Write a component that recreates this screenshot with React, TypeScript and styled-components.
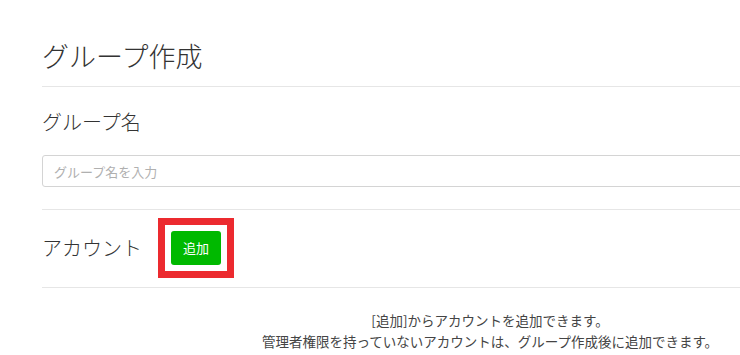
import React from 'react';
import styled, { createGlobalStyle } from 'styled-components';

const GlobalStyle = createGlobalStyle`
  html, body {
    margin: 0;
    padding: 0;
    overflow: hidden;
    background: #fff;
  }
  body {
    font-family: "Noto Sans CJK JP", "Noto Sans", sans-serif;
    color: #333;
  }
`;

export default function App() {
  return (
    <>
      <GlobalStyle />
      <Page>
        <Title>グループ作成</Title>
        <Section>
          <Label>グループ名</Label>
          <Input placeholder="グループ名を入力" />
        </Section>
        <Section>
          <Row>
            <Label>アカウント</Label>
            <Highlight>
              <AddButton>追加</AddButton>
            </Highlight>
          </Row>
        </Section>
        <Note>
          [追加]からアカウントを追加できます。
          <br />
          管理者権限を持っていないアカウントは、グループ作成後に追加できます。
        </Note>
      </Page>
    </>
  );
}

const Page = styled.div`
  width: 896px;
  margin-left: 42px;
  padding-top: 36px;
`;

const Title = styled.h1`
  margin: 0;
  font-size: 27px;
  font-weight: 300;
  line-height: 40px;
  padding-bottom: 10px;
  border-bottom: 1px solid #e6e6e6;
  color: #333;
`;

const Section = styled.div`
  padding: 20px 0 22px;
  border-bottom: 1px solid #e6e6e6;
`;

const Label = styled.h2`
  margin: 0;
  font-size: 20px;
  font-weight: 300;
  line-height: 30px;
  color: #333;
`;

const Input = styled.input`
  display: block;
  box-sizing: border-box;
  width: 100%;
  height: 32px;
  margin-top: 18px;
  padding: 0 11px;
  border: 1px solid #d4d4d4;
  border-radius: 3px;
  font-family: inherit;
  font-size: 13px;
  color: #333;
  outline: none;
  &::placeholder {
    color: #b0b0b0;
  }
`;

const Row = styled.div`
  display: flex;
  align-items: center;
  gap: 16px;
  height: 35px;
`;

const Highlight = styled.span`
  display: inline-flex;
  margin: -14px 0;
  padding: 6px;
  border: 7px solid #ec2a2f;
`;

const AddButton = styled.button`
  width: 50px;
  height: 34px;
  border: none;
  border-radius: 3px;
  background: #00b900;
  color: #fff;
  font-family: inherit;
  font-size: 13px;
  cursor: pointer;
`;

const Note = styled.p`
  margin: 22px 0 0;
  text-align: center;
  font-size: 13.5px;
  line-height: 21px;
  color: #444;
`;
